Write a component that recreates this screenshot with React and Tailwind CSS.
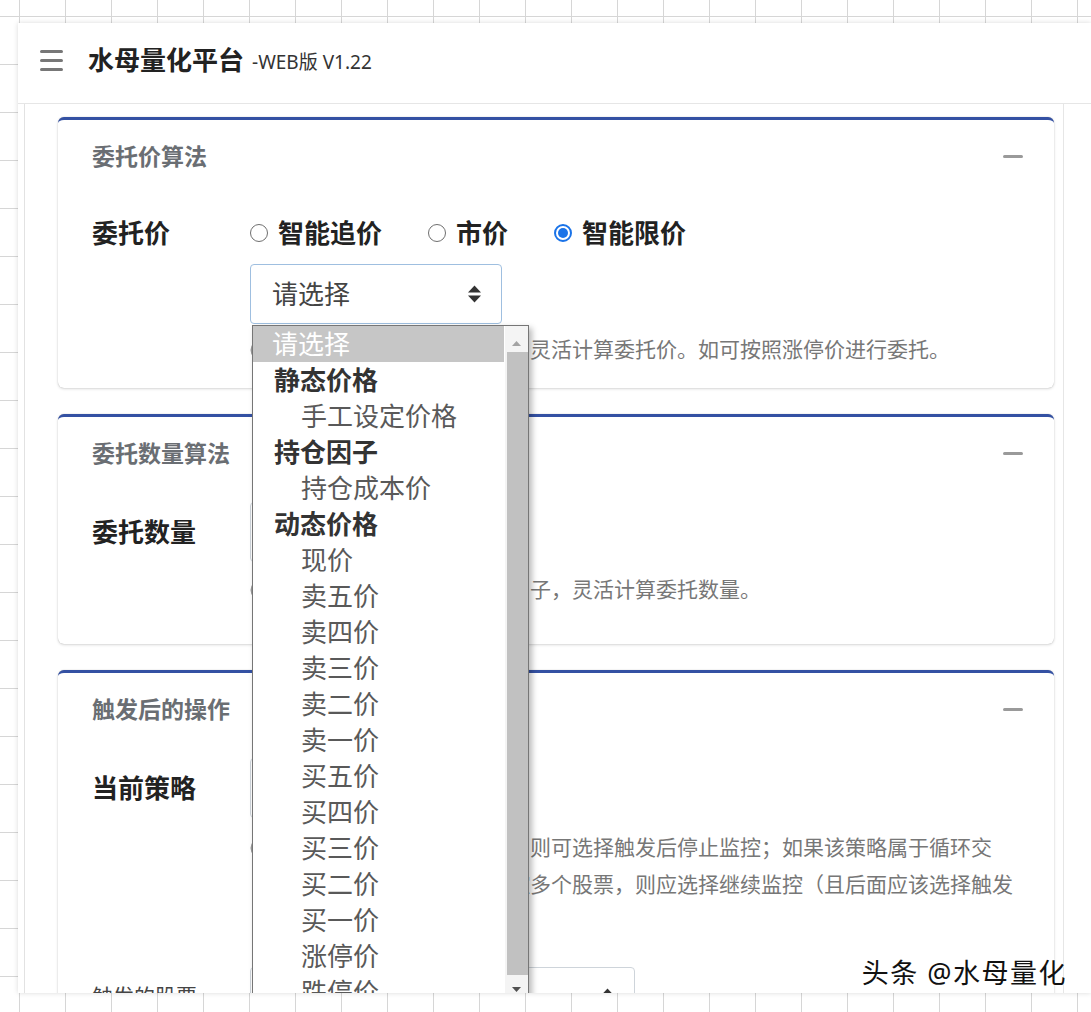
import React from "react";

const options = [
  { t: "请选择", sel: true },
  { t: "静态价格", group: true },
  { t: "手工设定价格" },
  { t: "持仓因子", group: true },
  { t: "持仓成本价" },
  { t: "动态价格", group: true },
  { t: "现价" },
  { t: "卖五价" },
  { t: "卖四价" },
  { t: "卖三价" },
  { t: "卖二价" },
  { t: "卖一价" },
  { t: "买五价" },
  { t: "买四价" },
  { t: "买三价" },
  { t: "买二价" },
  { t: "买一价" },
  { t: "涨停价" },
  { t: "跌停价" },
];

const Arrows = () => (
  <svg width="13" height="18" viewBox="0 0 13 18" className="shrink-0">
    <polygon points="0,7.5 6.5,0.5 13,7.5" fill="#333" />
    <polygon points="0,10.5 6.5,17.5 13,10.5" fill="#333" />
  </svg>
);

const InfoIcon = () => (
  <svg width="20" height="20" viewBox="0 0 20 20">
    <circle cx="10" cy="10" r="8.5" fill="none" stroke="#999" strokeWidth="2" />
    <rect x="9" y="8.5" width="2" height="6" fill="#999" />
    <rect x="9" y="5" width="2" height="2" fill="#999" />
  </svg>
);

const Radio = ({ checked, label }) => (
  <label className="flex items-center mr-[46px]">
    {checked ? (
      <span className="w-[18px] h-[18px] rounded-full border-2 border-[#1a73e8] flex items-center justify-center">
        <span className="w-[10px] h-[10px] rounded-full bg-[#1a73e8]" />
      </span>
    ) : (
      <span className="w-[18px] h-[18px] rounded-full border border-[#6f6f6f] bg-white" />
    )}
    <span className="ml-[10px] text-[26px] font-bold text-[#222]">{label}</span>
  </label>
);

const SelectBox = ({ width, focus, children }) => (
  <div
    className={
      focus
        ? "relative h-[60px] w-[252px] rounded-[4px] border border-[#9fbfe0] bg-white flex items-center justify-between pl-[21px] pr-[20px]"
        : "relative h-[60px] rounded-[4px] border border-[#ced4da] bg-white flex items-center justify-between pl-[21px] pr-[20px]"
    }
    style={width ? { width } : undefined}
  >
    <span className="text-[26px] text-[#444]">请选择</span>
    <Arrows />
    {children}
  </div>
);

const Help = ({ children, className }) => (
  <div className={"flex text-[21px] leading-[37px] text-[#777] " + className}>
    <span className="w-[28px] h-[37px] shrink-0 flex items-center">
      <InfoIcon />
    </span>
    <p className="whitespace-nowrap">{children}</p>
  </div>
);

const Card = ({ title, children }) => (
  <div className="bg-white rounded-[6px] border-t-[3px] border-[#3451a3] shadow-[0_0_1px_rgba(0,0,0,0.25),0_1px_3px_rgba(0,0,0,0.15)]">
    <div className="h-[72px] flex items-center justify-between pl-[34px] pr-[31px]">
      <h3 className="text-[23px] font-bold text-[#6a6e73]">{title}</h3>
      <span className="w-[20px] h-[3px] rounded-full bg-[#9a9a9a]" />
    </div>
    {children}
  </div>
);

const Dropdown = () => (
  <div className="absolute left-[1px] top-[60px] z-10 w-[277px] h-[673px] overflow-hidden bg-white border border-[#767676] shadow-[3px_3px_6px_rgba(0,0,0,0.28)]">
    <div className="w-[251px]">
      {options.map((o) =>
        o.sel ? (
          <div key={o.t} className="h-[36px] leading-[36px] pl-[19px] text-[26px] bg-[#c6c6c6] text-white">
            {o.t}
          </div>
        ) : o.group ? (
          <div key={o.t} className="h-[36px] leading-[36px] pl-[21px] text-[26px] font-bold text-[#333]">
            {o.t}
          </div>
        ) : (
          <div key={o.t} className="h-[36px] leading-[36px] pl-[48px] text-[26px] text-[#595959]">
            {o.t}
          </div>
        )
      )}
    </div>

    {/* scrollbar */}
    <div className="absolute right-0 top-0 bottom-0 w-[23px] flex flex-col bg-[#f4f4f4]">
      <div className="h-[26px] flex items-end justify-center pb-[6px]">
        <svg width="9" height="5" viewBox="0 0 9 5">
          <polygon points="0,5 4.5,0 9,5" fill="#a3a3a3" />
        </svg>
      </div>
      <div className="h-[623px] ml-[2px] bg-[#c1c1c1]" />
      <div className="flex-1 flex justify-center pt-[12px]">
        <svg width="9" height="5" viewBox="0 0 9 5">
          <polygon points="0,0 4.5,5 9,0" fill="#505050" />
        </svg>
      </div>
    </div>
  </div>
);

export default function App() {
  return (
    <div className="relative w-[1091px] h-[1012px] overflow-hidden bg-white bg-[linear-gradient(to_right,#d6d6d6_1px,transparent_1px),linear-gradient(to_bottom,#d6d6d6_1px,transparent_1px)] bg-size-[46px_48px] bg-position-[19px_16px] font-['Noto_Sans','Noto_Sans_CJK_SC',sans-serif]">
      <div className="ml-[18px] mt-[23px] h-[970px] overflow-hidden bg-white flex flex-col shadow-[0_0_5px_rgba(0,0,0,0.15)]">
        {/* header */}
        <header className="h-[81px] shrink-0 border-b border-[#e6e6e6] flex items-center pl-[22px] pb-[6px]">
          <div className="flex flex-col gap-[6px]">
            <span className="block w-[23px] h-[3px] rounded-full bg-[#777]" />
            <span className="block w-[23px] h-[3px] rounded-full bg-[#777]" />
            <span className="block w-[23px] h-[3px] rounded-full bg-[#777]" />
          </div>
          <h1 className="ml-[25px] text-[26px] font-bold text-[#222]">水母量化平台</h1>
          <span className="ml-[8px] mt-[4px] text-[19px] text-[#333]">-WEB版 V1.22</span>
        </header>

        <div className="flex flex-1 min-h-0">
          <div className="w-[7px] shrink-0 border-r border-[#e2e2e2]" />

          <main className="flex-1 pl-[33px] pr-[9px] pt-[13px] flex flex-col gap-[26px]">
            {/* 委托价算法 */}
            <Card title="委托价算法">
              <div className="flex px-[34px] pt-[21px] pb-[20px]">
                <div className="w-[158px] shrink-0 h-[40px] flex items-center text-[26px] font-bold text-[#222]">委托价</div>
                <div className="flex-1">
                  <div className="h-[40px] flex items-center">
                    <Radio label="智能追价" />
                    <Radio label="市价" />
                    <Radio label="智能限价" checked />
                  </div>
                  <div className="mt-[11px]">
                    <SelectBox focus>
                      <Dropdown />
                    </SelectBox>
                  </div>
                  <Help className="mt-[7px]">可根据所选择的价格因子，灵活计算委托价。如可按照涨停价进行委托。</Help>
                </div>
              </div>
            </Card>

            {/* 委托数量算法 */}
            <Card title="委托数量算法">
              <div className="flex px-[34px] pt-[13px] pb-[36px]">
                <div className="w-[158px] shrink-0 h-[60px] flex items-center text-[26px] font-bold text-[#222]">委托数量</div>
                <div className="flex-1">
                  <SelectBox width={252} />
                  <Help className="mt-[9px]">可根据持仓、资金等多种因子，灵活计算委托数量。</Help>
                </div>
              </div>
            </Card>

            {/* 触发后的操作 */}
            <Card title="触发后的操作">
              <div className="px-[34px] pt-[13px] pb-[30px]">
                <div className="flex">
                  <div className="w-[158px] shrink-0 h-[60px] flex items-center text-[26px] font-bold text-[#222]">当前策略</div>
                  <div className="flex-1">
                    <SelectBox width={252} />
                    <Help className="mt-[11px]">
                      若该策略仅针对一个股票，则可选择触发后停止监控；如果该策略属于循环交
                      <br />
                      易策略，或者需要同时监控多个股票，则应选择继续监控（且后面应该选择触发
                      <br />
                      的股票）。
                    </Help>
                  </div>
                </div>
                <div className="flex mt-[27px]">
                  <div className="w-[158px] shrink-0 h-[60px] flex items-center text-[21px] text-[#444]">触发的股票</div>
                  <SelectBox width={385} />
                </div>
              </div>
            </Card>
          </main>

          <div className="w-[28px] shrink-0 border-l border-[#e6e6e6]" />
        </div>
      </div>

      {/* watermark */}
      <div className="absolute right-[24px] bottom-[24px] text-[27px] leading-[30px] tracking-[1.5px] text-[#111] [text-shadow:0_0_2px_#fff,0_0_2px_#fff]">
        头条 @水母量化
      </div>
    </div>
  );
}
